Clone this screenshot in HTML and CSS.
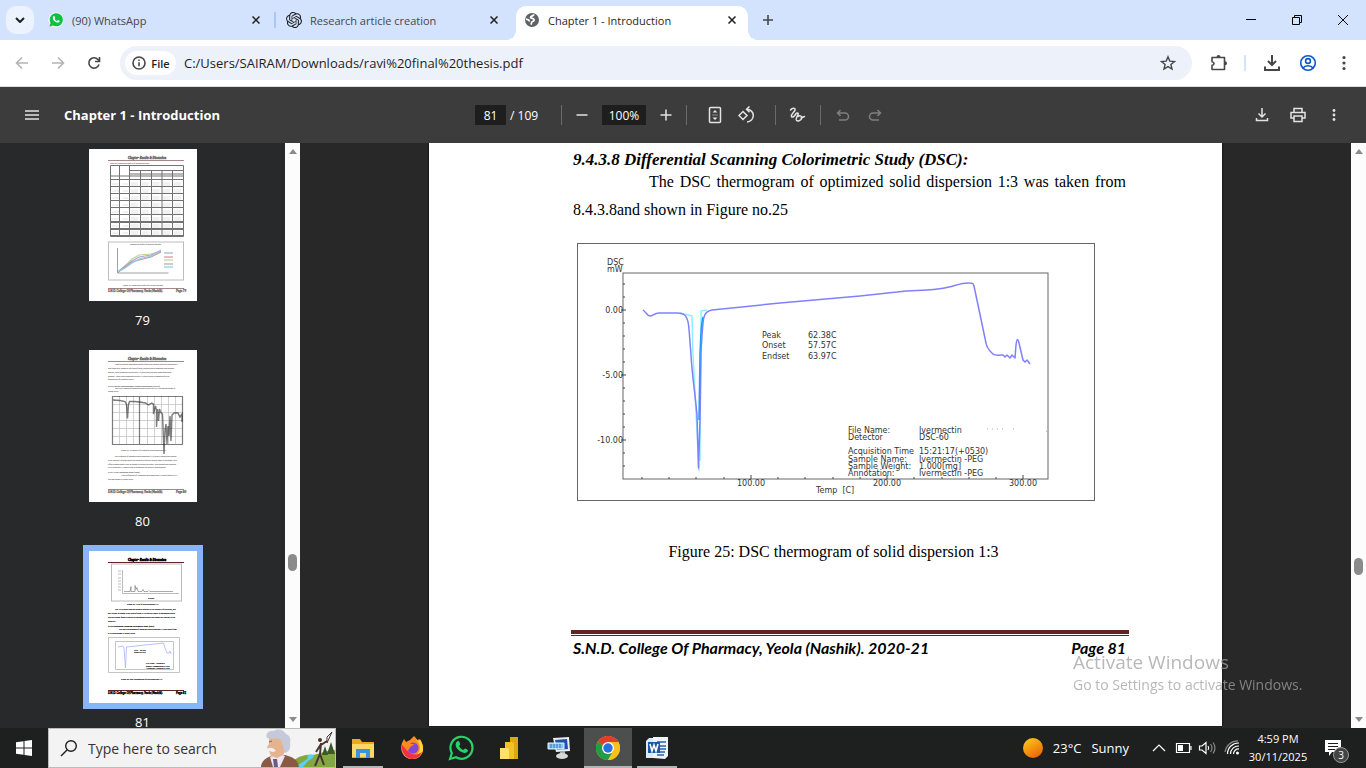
FILE: index.html
```html
<!DOCTYPE html>
<html lang="en">
<head>
<meta charset="utf-8">
<title>Chapter 1 - Introduction</title>
<link rel="stylesheet" href="styles.css">
</head>

<body>
<header class="tabstrip">
  <button class="tab-search" aria-label="Search tabs"><svg width="10" height="6" viewBox="0 0 10 6"><path d="M1 1l4 4 4-4" fill="none" stroke="#1f1f1f" stroke-width="2"/></svg></button>
  <div class="tab">
    <svg width="16" height="16" viewBox="0 0 16 16"><circle cx="8" cy="8" r="7.5" fill="#fff"/><path d="M1.5 14.5l1-3.5A6.6 6.6 0 1 1 5 13.5z" fill="#0dc143"/><path d="M5.5 4.2c.5-.5 1-.2 1.2.3l.5 1.200c.1.4-.6.9-.5 1.2.4.8 1.2 1.6 2.3 2 .4 0 .8-1 1.2-.8l1.3.7c.3.2.2.7-.1 1.1-.8 1-2.200.8-3.6.1C6.3 9.2 5 7.700 4.800 6.200c0-.8.3-1.600.7-2z" fill="#fff"/></svg>
    <span>(90) WhatsApp</span>
    <button class="close" aria-label="Close tab"><svg width="8" height="8" viewBox="0 0 8 8"><path d="M.5.5l7 7m0-7l-7 7"/></svg></button>
  </div>
  <i class="tab-sep"></i>
  <div class="tab">
    <svg width="16" height="16" viewBox="0 0 24 24" fill="#1f1f1f"><path d="M22.2819 9.8211a5.9847 5.9847 0 0 0-.5157-4.9108 6.0462 6.0462 0 0 0-6.5098-2.9A6.0651 6.0651 0 0 0 4.9807 4.1818a5.9847 5.9847 0 0 0-3.9977 2.9 6.0462 6.0462 0 0 0 .7427 7.0966 5.98 5.98 0 0 0 .511 4.9107 6.051 6.051 0 0 0 6.5146 2.9001A5.9847 5.9847 0 0 0 13.2599 24a6.0557 6.0557 0 0 0 5.7718-4.2058 5.9894 5.9894 0 0 0 3.9977-2.9001 6.0557 6.0557 0 0 0-.7475-7.0729zm-9.022 12.6081a4.4755 4.4755 0 0 1-2.8764-1.0408l.1419-.0804 4.7783-2.7582a.7948.7948 0 0 0 .3927-.6813v-6.7369l2.02 1.1686a.071.071 0 0 1 .038.052v5.5826a4.504 4.504 0 0 1-4.4945 4.4944zm-9.6607-4.1254a4.4708 4.4708 0 0 1-.5346-3.0137l.142.0852 4.783 2.7582a.7712.7712 0 0 0 .7806 0l5.8428-3.3685v2.3324a.0804.0804 0 0 1-.0332.0615L9.74 19.9502a4.4992 4.4992 0 0 1-6.1408-1.6464zM2.3408 7.8956a4.485 4.485 0 0 1 2.3655-1.9728V11.6a.7664.7664 0 0 0 .3879.6765l5.8144 3.3543-2.0201 1.1685a.0757.0757 0 0 1-.071 0l-4.8303-2.7865A4.504 4.504 0 0 1 2.3408 7.872zm16.5963 3.8558L13.1038 8.364 15.1192 7.2a.0757.0757 0 0 1 .071 0l4.8303 2.7913a4.4944 4.4944 0 0 1-.6765 8.1042v-5.6772a.79.79 0 0 0-.407-.667zm2.0107-3.0231l-.142-.0852-4.7735-2.7818a.7759.7759 0 0 0-.7854 0L9.409 9.2297V6.8974a.0662.0662 0 0 1 .0284-.0615l4.8303-2.7866a4.4992 4.4992 0 0 1 6.6802 4.66zM8.3065 12.863l-2.02-1.1638a.0804.0804 0 0 1-.038-.0567V6.0742a4.4992 4.4992 0 0 1 7.3757-3.4537l-.142.0805L8.704 5.459a.7948.7948 0 0 0-.3927.6813zm1.0976-2.3654l2.602-1.4998 2.6069 1.4998v2.9994l-2.5974 1.4997-2.6067-1.4997Z"/></svg>
    <span>Research article creation</span>
    <button class="close" aria-label="Close tab"><svg width="8" height="8" viewBox="0 0 8 8"><path d="M.5.5l7 7m0-7l-7 7"/></svg></button>
  </div>
  <i class="tab-sep hidden"></i>
  <div class="tab active">
    <svg width="16" height="16" viewBox="0 0 16 16"><circle cx="8" cy="8" r="7" fill="#5f6368"/><path d="M10 2.500c-.3 1.500-3.300 1.200-3.500 2.800-.1 1.500 2.700.6 3.500 2 .6 1.100-.4 2.200-1.600 2.200-1 0-.6 1.500-1.500 3.100M2 7.200c2 .3 3.300 1 3.300 2.300" fill="none" stroke="#fff" stroke-width="1.700"/></svg>
    <span>Chapter 1 - Introduction</span>
    <button class="close" aria-label="Close tab"><svg width="8" height="8" viewBox="0 0 8 8"><path d="M.5.5l7 7m0-7l-7 7"/></svg></button>
  </div>
  <button class="new-tab" aria-label="New tab"><svg width="12" height="12" viewBox="0 0 12 12"><path d="M6 1v10M1 6h10" stroke="#474747" stroke-width="1.600"/></svg></button>
  <div class="window-buttons">
    <button aria-label="Minimize"><svg width="10" height="10" viewBox="0 0 10 10"><path d="M0 4.500h10"/></svg></button>
    <button aria-label="Restore"><svg width="10" height="10" viewBox="0 0 10 10"><path d="M.5 2.500h7v7h-7zM2.500 2.500v-2h7v7h-2"/></svg></button>
    <button aria-label="Close"><svg width="10" height="10" viewBox="0 0 10 10"><path d="M0 0l10 10M10 0L0 10"/></svg></button>
  </div>
</header>

<nav class="toolbar">
  <button disabled aria-label="Back"><svg width="16" height="16" viewBox="0 0 16 16"><path d="M14 8H3M8 2.500L2.500 8 8 13.500" stroke="#b4b4b4"/></svg></button>
  <button disabled aria-label="Forward"><svg width="16" height="16" viewBox="0 0 16 16"><path d="M2 8h11M8 2.500L13.500 8 8 13.500" stroke="#b4b4b4"/></svg></button>
  <button aria-label="Reload"><svg width="16" height="16" viewBox="0 0 16 16"><path d="M13 9.500A5.200 5.200 0 1 1 12 4.500l1.500 1.500M13.500 2v4.500H9"/></svg></button>
  <div class="omnibox">
    <button class="file-chip"><svg width="16" height="16" viewBox="0 0 16 16"><circle cx="8" cy="8" r="6"/><path d="M8 7.300v4M8 4.500v1.500"/></svg>File</button>
    <input type="text" aria-label="Address" value="C:/Users/SAIRAM/Downloads/ravi%20final%20thesis.pdf">
    <button aria-label="Bookmark"><svg width="16" height="16" viewBox="0 0 16 16"><path d="M8 1.800l1.800 4.300 4.700.4-3.600 3 1.100 4.600-4-2.500-4 2.500 1.100-4.600-3.600-3 4.700-.4z" stroke-width="1.400"/></svg></button>
  </div>
  <button aria-label="Extensions"><svg width="18" height="18" viewBox="0 0 18 18"><path d="M2 3.500h12.500v12H2v-4.300c2.700-.3 2.700-3.200 0-3.500z" stroke-linejoin="round"/><path d="M6.500 3a2 2 0 0 1 4 0zM15 7.300a2 2 0 0 1 0 4z" fill="#474747" stroke="none"/></svg></button>
  <i class="toolbar-sep"></i>
  <button aria-label="Downloads"><svg width="18" height="18" viewBox="0 0 18 18"><path d="M9 1v10M5 7l4 4 4-4M2 12.500V16h14v-3.500" stroke-width="2"/></svg></button>
  <button aria-label="Profile"><svg class="profile" width="18" height="18" viewBox="0 0 18 18"><circle cx="9" cy="9" r="7.300"/><circle cx="9" cy="7" r="2.400"/><path d="M4 14c2-3 8-3 10 0"/></svg></button>
  <button aria-label="Menu"><svg class="dots" width="16" height="16" viewBox="0 0 16 16"><circle cx="8" cy="2.500" r="1.600"/><circle cx="8" cy="8" r="1.600"/><circle cx="8" cy="13.500" r="1.600"/></svg></button>
</nav>

<div class="pdf-bar">
  <div class="bar-start">
    <button aria-label="Toggle sidebar"><svg width="16" height="16" viewBox="0 0 16 16"><path d="M1 4h14M1 8h14M1 12h14"/></svg></button>
    <h1>Chapter 1 - Introduction</h1>
  </div>
  <div class="bar-center">
    <input class="page-no" type="text" aria-label="Page number" value="81"><span class="page-total">/ 109</span>
    <i class="bar-sep"></i>
    <button aria-label="Zoom out"><svg width="16" height="16" viewBox="0 0 16 16"><path d="M2.500 8h11"/></svg></button>
    <input class="zoom" type="text" aria-label="Zoom level" value="100%">
    <button aria-label="Zoom in"><svg width="16" height="16" viewBox="0 0 16 16"><path d="M2.500 8h11M8 2.500v11"/></svg></button>
    <i class="bar-sep"></i>
    <button class="after-sep" aria-label="Fit to page"><svg width="18" height="18" viewBox="0 0 18 18"><rect x="3.500" y="1.500" width="11" height="15" rx="1"/><path d="M6.500 6.500L9 4l2.500 2.500zM6.500 11.500L9 14l2.500-2.500z" fill="#e3e3e3" stroke="none"/><path d="M6.500 9h5" stroke-dasharray="1 1" stroke-width="1"/></svg></button>
    <button aria-label="Rotate"><svg width="18" height="18" viewBox="0 0 18 18"><path d="M5 5.500l4 4-4 4-4-4zM9 3.300a6.300 6.300 0 1 1 0 12.600M11.500.5L8.500 3.300l3 3"/></svg></button>
    <i class="bar-sep wide"></i>
    <button aria-label="Draw"><svg width="18" height="18" viewBox="0 0 18 18"><path d="M2.500 4C4 1.500 7.500 1.500 7 4 6.500 6.500 2.500 8 3.500 10.500c1 1.500 3-.5 4.300-2.500 1-1.500 2.700-1.500 2.400 0-.5 2.500-2.700 3.500-2 5.800.8 2.200 5 1 5.600-1.800.4-2.300-2.500-2.800-3.800-1.500M13 12l3.500-1.500" stroke-linecap="round"/></svg></button>
    <i class="bar-sep last"></i>
    <button disabled aria-label="Undo"><svg width="16" height="16" viewBox="0 0 16 16"><path d="M5.500 3L2.500 6l3 3M2.500 6H10a3.500 3.500 0 0 1 0 7H4"/></svg></button>
    <button disabled aria-label="Redo"><svg width="16" height="16" viewBox="0 0 16 16"><path d="M10.500 3l3 3-3 3M13.500 6H6a3.500 3.500 0 0 0 0 7h6"/></svg></button>
  </div>
  <div class="bar-end">
    <button aria-label="Download"><svg width="16" height="16" viewBox="0 0 16 16"><path d="M8 1v9M4.500 6.500L8 10l3.500-3.500M2.500 11v2.500h11V11"/></svg></button>
    <button aria-label="Print"><svg width="18" height="18" viewBox="0 0 18 18"><path d="M5 6V2.500h8V6M5 12H2V6.500h14V12h-3M5 10h8v5.500H5z"/></svg></button>
    <button aria-label="More actions"><svg class="dots" width="16" height="16" viewBox="0 0 16 16"><circle cx="8" cy="3.500" r="1.400"/><circle cx="8" cy="8" r="1.400"/><circle cx="8" cy="12.500" r="1.400"/></svg></button>
  </div>
</div>

<main class="pdf">
  <aside class="sidebar">
    <div class="thumbs">
      <figure class="thumb">
        <svg class="faded" viewBox="0 0 108 152">
          <text class="t-head" x="58" y="10">Chapter- Results &amp; Discussion</text>
          <path d="M19 11.500h76" stroke="#622423"/>
          <text class="t-text" x="21" y="15">Table 20: Dissolution profile of physical mixture</text>
          <g fill="none" stroke="#000" stroke-width="1">
            <path d="M21.500 16.500h73v71h-73zM30.500 16v71M40.500 16v71M51.500 22v65M62.500 22v65M73 22v65M83.500 22v65M40 21.500h54M40 25h54M21 27h73M21 30.500h73M21 37.500h73M21 44.500h73M21 51.500h73M21 58.500h73M21 65.500h73M21 72.500h73M21 73.500h73M21 79.500h73M21 80.500h73M21 86.500h73"/>
            <path d="M42 34h51M42 36h51M42 41h51M42 43h51M42 48h51M42 50h51M42 55h51M42 57h51M42 62h51M42 64h51M42 69h51M42 71h51M42 76h51M42 78h51M42 83h51M42 85h51M23 35h16M23 42h16M23 49h16M23 56h16M23 63h16M23 70h16M23 77h16M23 84h16" stroke="#999" stroke-dasharray="7 3.700" stroke-width=".5"/>
            <rect x="19.500" y="93" width="75" height="38" stroke="#888"/>
            <path d="M28.500 99v25h51" stroke="#555"/>
          </g>
          <text class="t-text" x="41" y="96">Dissolution profile of physical mixture</text>
          <g fill="none" stroke-width="1.200">
            <path d="M29 123l7-6 7-7 7-4 12-1 10-3" stroke="#8ab03a"/>
            <path d="M29 123l7-5 7-5 7-2 12-3 10-5" stroke="#b33b38"/>
            <path d="M29 123l7-6 7-5 7-4 12-2 10-4" stroke="#7357a0"/>
            <path d="M29 123l7-4 7-5 7-4 12-3 10-6" stroke="#2da5c8"/>
            <path d="M75 104h9" stroke="#4579b8"/><path d="M75 108h9" stroke="#b33b38"/><path d="M75 111h9" stroke="#8ab03a"/><path d="M75 115h9" stroke="#7357a0"/><path d="M75 118h9" stroke="#2da5c8"/>
          </g>
          <text class="t-text" x="34" y="137">Figure 21: Dissolution profile of Physical mixture</text>
          <path d="M19 139.500h76" stroke="#622423"/>
          <text class="t-foot" x="19" y="143">S.N.D. College Of Pharmacy, Yeola (Nashik).</text><text class="t-foot" x="87" y="143">Page 79</text>
        </svg>
        <figcaption>79</figcaption>
      </figure>
      <figure class="thumb">
        <svg class="faded" viewBox="0 0 108 152">
          <text class="t-head" x="58" y="10">Chapter- Results &amp; Discussion</text>
          <path d="M19 11.500h76" stroke="#622423"/>
          <g class="t-text">
            <text x="26" y="15">From the data of dissolution profile of physical mixture and solid dispersion it</text>
            <text x="19" y="19">was found that, among all the ratio of drug, excipient solid dispersion and physical</text>
            <text x="19" y="23">mixture, solid dispersion having ratio 1:3 (SD-PEG) and have good dissolution</text>
            <text x="19" y="27">property. Hence solid dispersion having 1:3 ratio is used as optimized for the</text>
            <text x="19" y="30">formulation of ivermectin tablet.</text>
            <text class="b" x="19" y="37">9.4.3.6 Fourier Transformation Infrared Spectroscopy (FT-IR)</text>
            <text x="26" y="39">The FT-IR spectra of optimized drug is given 8.4.3.6. The spectra shown in</text>
            <text x="19" y="42">Figure no.23</text>
            <text x="32" y="101">Figure 23: IR spectra of Ivermectin Solid dispersion 1:3</text>
            <text x="26" y="107">FT-IR spectra of optimized solid dispersion (1:3) clearly showed that change</text>
            <text x="19" y="111">in the intensity of peaks which are present in physical mixture drug IR spectrum. This</text>
            <text x="19" y="115">effect happens usually due to change in crystalline nature. This change and alteration</text>
            <text x="19" y="118">in IR bands and 1:3 would lead in responsible for stability enhancement.</text>
            <text class="b" x="19" y="123">9.4.3.7 X-ray Diffraction Study (XRD):</text>
            <text x="32" y="126">X-ray diffraction of Ivermectin solid dispersion 1:3 taken from 8.4.3.7</text>
            <text x="19" y="130">and was shown in Figure no.24</text>
          </g>
          <path d="M30.500 46v48M37.500 46v48M44.500 46v48M58.500 46v48M65.500 46v48M72.500 46v48M79.500 46v48M86.500 46v48M24 54.500h70M24 62.500h70M24 70.500h70M24 78.500h70M24 86.500h70" stroke="#888" stroke-width=".7"/>
          <path d="M23.500 46.500h70v48h-70zM50.500 46v48" fill="none" stroke="#111" stroke-width="1.200"/>
          <path d="M24 50l7 .5 5 1 1.500 3 1 14 1-14 1-3h5l5 .5 6 1 3 2 3-2 2 1v10l2-8 1 4v17l1-18 1 12 1-12 1 3 2 2 1.500 40 1-24 1-6 1 20 1-18 1 10 1-20 1 25 1-26 2-2 4 0 2 4 2-3v8" fill="none" stroke="#111" stroke-width="1.400"/>
          <path d="M19 139.500h76" stroke="#622423"/>
          <text class="t-foot" x="19" y="143">S.N.D. College Of Pharmacy, Yeola (Nashik).</text><text class="t-foot" x="87" y="143">Page 80</text>
        </svg>
        <figcaption>80</figcaption>
      </figure>
      <figure class="thumb current">
        <svg viewBox="0 0 108 152">
          <text class="t-head" x="58" y="10">Chapter- Results &amp; Discussion</text>
          <path d="M19 11.500h76" stroke="#622423"/>
          <rect x="22.500" y="13" width="70" height="37" fill="none" stroke="#bbb"/>
          <path d="M33.500 19v23.500H90M29 20h3M29 23h3M29 27h3M29 30h3M29 33h3M29 36h3M29 39h3" fill="none" stroke="#aaa" stroke-width=".8"/>
          <path d="M35 40.500h6l1-5v5h4v-6l1 4 1-2 1 4h4l1-2 1 2h4l1-1 1 1h23" fill="none" stroke="#555" stroke-width=".5"/>
          <g class="t-text">
            <text x="59" y="48">2-Theta</text>
            <text x="38" y="54">Figure 24: XRD of solid dispersion 1:3</text>
            <text x="26" y="59">The XRD graph obtained showed decrease in the intensity of the peaks, this</text>
            <text x="19" y="63">may be due to change in the state of drug i.e Crystalline nature to amorphous nature</text>
            <text x="19" y="67">and this change from crystalline to amorphous nature also causes the increase in the</text>
            <text x="19" y="71">solubility.</text>
            <text class="b" x="19" y="76">9.4.3.8 Differential Scanning Colorimetric Study (DSC):</text>
            <text x="30" y="79">The DSC thermogram of optimized solid dispersion 1:3 was taken from</text>
            <text x="19" y="83">8.4.3.8and shown in Figure no.25</text>
            <text x="45" y="100">Peak</text><text x="51" y="100">62.38C</text>
            <text x="45" y="102">Endset</text><text x="51" y="102">63.97C</text>
            <text x="57" y="113">File Name:</text><text x="67" y="113">Ivermectin</text>
            <text x="57" y="116">Sample Name:</text><text x="67" y="116">Ivermectin -PEG</text>
            <text x="57" y="118">Annotation:</text><text x="67" y="118">Ivermectin -PEG</text>
            <text x="32" y="129">Figure 25: DSC thermogram of solid dispersion 1:3</text>
          </g>
          <path d="M19.500 86.500h71v35h-71zM26.500 90.500h58v28h-58z" fill="none" stroke="#aaa" stroke-width=".7"/>
          <path d="M29 96l5-1 1 2 1.500 20L37.500 96l37-4 1.500 5 2 5h2l1-2 1 3" fill="none" stroke="#a5b2ff" stroke-width=".8"/>
          <path d="M19 139.500h76" stroke="#622423"/>
          <text class="t-foot" x="19" y="143">S.N.D. College Of Pharmacy, Yeola (Nashik).</text><text class="t-foot" x="87" y="143">Page 81</text>
        </svg>
        <figcaption>81</figcaption>
      </figure>
    </div>
    <div class="scrollbar"><i class="up"></i><i class="handle"></i><i class="down"></i></div>
  </aside>

  <section class="viewer">
    <div class="canvas">
      <article class="page">
        <h2>9.4.3.8 Differential Scanning Colorimetric Study (DSC):</h2>
        <p>The DSC thermogram of optimized solid dispersion 1:3 was taken from 8.4.3.8and shown in Figure no.25</p>
        <figure class="thermogram">
          <svg width="518" height="258" viewBox="0 0 518 258">
            <rect x=".5" y=".5" width="517" height="257" class="frame"/>
            <rect x="46" y="30" width="425" height="206" class="frame"/>
            <!-- axis ticks -->
            <path class="ticks" d="M46 41h2M46 54h2M44 67h5M46 80h2M46 93h2M46 106h2M46 119h2M44 132h5M46 145h2M46 158h2M46 171h2M46 184h2M44 197h5M46 210h2M46 223h2M65 236v-2M92 236v-2M119 236v-2M147 236v-2M174 236v-4M201 236v-2M228 236v-2M256 236v-2M283 236v-2M310 236v-4M337 236v-2M365 236v-2M392 236v-2M419 236v-2M446 236v-4"/>
            <g class="labels">
              <text x="30" y="22">DSC</text><text x="30" y="29">mW</text>
              <text class="r" x="46" y="70">0.00</text><text class="r" x="46" y="135">-5.00</text><text class="r" x="46" y="200">-10.00</text>
              <text class="m" x="174" y="243">100.00</text><text class="m" x="310" y="243">200.00</text><text class="m" x="446" y="243">300.00</text>
              <text x="239" y="250">Temp&#160; [C]</text>
              <text x="185" y="95">Peak</text><text x="231" y="95">62.38C</text>
              <text x="185" y="105">Onset</text><text x="231" y="105">57.57C</text>
              <text x="185" y="116">Endset</text><text x="231" y="116">63.97C</text>
              <text x="271" y="190">File Name:</text><text x="342" y="190">Ivermectin</text>
              <text x="271" y="197">Detector</text><text x="342" y="197">DSC-60</text>
              <text x="271" y="211">Acquisition Time</text><text x="342" y="211">15:21:17(+0530)</text>
              <text x="271" y="219">Sample Name:</text><text x="342" y="219">Ivermectin -PEG</text>
              <text x="271" y="226">Sample Weight:</text><text x="342" y="226">1.000[mg]</text>
              <text x="271" y="233">Annotation:</text><text x="342" y="233">Ivermectin -PEG</text>
            </g>
            <g fill="none" stroke-width="1.500" stroke-linejoin="round">
              <path d="M103 70l12 3 1 38 6 117M123 218l1-150 6-1" stroke="#8df0ff"/>
              <path d="M66 67c3 2 4 6 7 6s4-3 9-3h18c8 0 11 3 12 16l2 26c1 20 4 37 6 60l1.500 53L123 177l1-67c1-20 2-33 3-36 1-4 3-6 8-7l68-7 80-7 37-4c15-2 22-1 30-2 14-1 18-2 22-3 8-2 12-4 20-4 4 0 4 0 5 3L401 62l8 38c1 6 4 8 7 11 2 2 8 1 10 1l2 2 2-2 3 3 2-3 3 3 1-13c1-8 2-6 3-2l4 17 2 2 2-2 3 4" stroke="#8080ff"/>
              <path d="M122 177l1-67c1-20 1-30 3-36" stroke="#1f9dff"/>
            </g>
            <path d="M410 186h20M436 186h3M470 188l-2 1" stroke="#aaa" stroke-dasharray="1 4"/>
          </svg>
          <figcaption>Figure 25: DSC thermogram of solid dispersion 1:3</figcaption>
        </figure>
        <footer>
          <span>S.N.D. College Of Pharmacy, Yeola (Nashik). 2020-21</span>
          <span>Page 81</span>
        </footer>
      </article>
    </div>
    <div class="scrollbar"><i class="up"></i><i class="handle"></i><i class="down"></i></div>
  </section>
</main>

<div class="activate">
  <strong>Activate Windows</strong>
  <span>Go to Settings to activate Windows.</span>
</div>

<footer class="taskbar">
  <button class="start" aria-label="Start"><svg width="16" height="16" viewBox="0 0 16 16"><path d="M0 2.200L7.500 1.200v6.300H0zM8.500 1L16 0v7.500H8.500zM0 8.500h7.500v6.300L0 13.800zM8.500 8.500H16V16l-7.500-1z" fill="#fff"/></svg></button>
  <label class="search">
    <svg width="18" height="18" viewBox="0 0 18 18"><path d="M1 17l6-6" stroke="#1f1f1f" stroke-width="1.500"/><circle cx="11" cy="7" r="5.300" fill="none" stroke="#1f1f1f" stroke-width="1.400"/></svg>
    <input type="text" placeholder="Type here to search" aria-label="Type here to search">
    <svg width="74" height="38" viewBox="0 0 74 38">
      <path d="M26 38c7-10 18-13 26-12l8-2c6-3 10-2 14-3v17z" fill="#82a83f"/>
      <path d="M46 27c6-3 8-1 6 2l-5 3-5 6h-6c2-5 14-7 10-11z" fill="#5bd0f0"/>
      <path d="M61 26l3-9 3 9zM66 25l4-12 4 12z" fill="#3c5a26"/>
      <path d="M0 38c0-5 4-9 10-11l14-1c8 2 13 5 14 12z" fill="#8a5a44"/>
      <path d="M9 28l3 10h7l5-11-8-3z" fill="#eee7f2"/><path d="M12 30l1 8h4l-1-8z" fill="#6c5a86"/>
      <path d="M8 9c4-4 12-4 16 0l2 10-4 7-6 3-6-2-2-5-2-4 2-3z" fill="#e5b48f"/>
      <path d="M6 9C4 5 8 1 13 2c4-3 10-1 12 3 4 1 5 6 4 9 1 5-1 9-5 10l-2-7-2-6c-4-3-8 0-14-2z" fill="#c5c9d9"/>
      <path d="M6 20c3-2 6-2 9 2l-3 1-4-1-2 2z" fill="#eef0f6"/><path d="M8 13l3-1" stroke="#6a6a7e"/>
      <g stroke="#4a3630" fill="none" stroke-width="2"><path d="M60 14l-1 11-5 12M59 25l4 11M60 15l-5 8M60 16l6-4"/><path d="M66 14l5-11-5 5z" stroke-width="1"/></g><circle cx="59" cy="11" r="2" fill="#4a3630"/>
    </svg>
  </label>
  <nav class="apps">
    <button class="running" aria-label="File Explorer"><svg width="24" height="24" viewBox="0 0 24 24"><path d="M1 3h8l2 3h12v16H1z" fill="#e9a923"/><path d="M1 8h22v13H1z" fill="#ffd766"/><path d="M5 13h14v9h-4v-5H9v5H5z" fill="#3a93dd"/></svg></button>
    <button aria-label="Firefox"><svg width="24" height="24" viewBox="0 0 24 24"><path d="M12 23C4 23-1 15 2 7l2-4 2 3 4-2 4-4 3 4 3-1c4 7 4 13 1 16-2 3-6 4-9 4z" fill="#ff8a1e"/><path d="M14 0l3 5c4 4 3 9 2 11-4 6-12 6-16 0 1 4 4 7 9 7 7 0 11-5 11-11 0-4-2-7-3-8l-2 1z" fill="#ffd43b"/><path d="M2 9c-1 7 4 14 10 14 5 0 9-3 10-7-6 4-11 3-14-1z" fill="#f0304b"/><circle cx="13" cy="12" r="5.500" fill="#8545d8"/><path d="M4 8l5-2 2 2h3c-1 2-4 2-4 4l-3 3z" fill="#ff8a1e"/></svg></button>
    <button aria-label="WhatsApp"><svg width="26" height="26" viewBox="0 0 26 26"><path d="M2 24l1.800-6A11 11 0 1 1 8 22.300z" fill="none" stroke="#25d366" stroke-width="2.200"/><path d="M9 6.500c1-1 2-.5 2.300.3l.9 2.200c.2.800-1.200 1.600-1 2.200.8 1.600 2 2.800 4 3.700.7.100 1.400-1.500 2.200-1.300l2.200 1.100c.8.500.2 1.700-.4 2.300-1.700 1.500-4.200 1-6.400-.2-2.500-1.400-4.600-3.700-5.100-6.300-.2-1.500.3-3 1.300-4z" fill="#25d366"/></svg></button>
    <button aria-label="Power BI"><svg width="24" height="24" viewBox="0 0 24 24"><path d="M12 1h8v22h-8z" fill="#e0a610"/><path d="M7 6h7q2 0 2 2v15H7z" fill="#f2c22c"/><path d="M2 12h7q2 0 2 2v9H2z" fill="#ffe06a"/></svg></button>
    <button aria-label="Remote desktop"><svg width="24" height="24" viewBox="0 0 24 24"><path d="M6 2l16-1 1 14-14 1z" fill="#e8edf4"/><path d="M8 4l12-1 1 10-11 1z" fill="#1f4fb4"/><path d="M1 7h16v6H1z" fill="#8cc8f4" stroke="#e8f4ff"/><path d="M3 9h12M3 11h12" stroke="#2870c0" stroke-dasharray="2 1"/><path d="M13 15h5v4h-5z" fill="#aaa"/><ellipse cx="15" cy="20" rx="6" ry="3" fill="#d8d8d8"/></svg></button>
    <button class="running selected" aria-label="Google Chrome"><svg width="24" height="24" viewBox="0 0 24 24"><circle cx="12" cy="12" r="12" fill="#fbc116"/><path d="M12 12L1.600 6A12 12 0 0 1 22.400 6z" fill="#e33b2e"/><path d="M1.600 6A12 12 0 0 0 12 24l5.200-9L12 12z" fill="#229d47"/><path d="M22.400 6H12l5.200 9L12 24A12 12 0 0 0 22.400 6z" fill="#fbc116"/><circle cx="12" cy="12" r="6" fill="#fff"/><circle cx="12" cy="12" r="4.700" fill="#2a70e0"/></svg></button>
    <button class="running" aria-label="Word"><svg width="24" height="24" viewBox="0 0 24 24"><path d="M8 1h15v19l-3 3-12-1z" fill="#eef4fb"/><path d="M12 6h9M15 10h6M15 13h6M12 16h8M12 19h7" stroke="#2b60ab" stroke-width="1.400"/><path d="M1 5l3-3h4v20H1z" fill="#dfe9f5"/><path d="M3 6h12v11H3z" fill="#1e56a4"/><path d="M5 8l2 7 2-6 2 6 2-7" stroke="#fff" stroke-width="1.600" fill="none"/></svg></button>
  </nav>
  <div class="tray">
    <span class="weather"><svg width="20" height="20" viewBox="0 0 20 20"><defs><linearGradient id="sun" x2=".6" y2="1"><stop stop-color="#ffcf1a"/><stop offset="1" stop-color="#ec6a08"/></linearGradient></defs><circle cx="10" cy="10" r="10" fill="url(#sun)"/></svg><span>23°C</span><span>Sunny</span></span>
    <svg width="24" height="16" viewBox="0 0 24 16"><path d="M6 11l6-6 6 6"/></svg>
    <svg width="24" height="16" viewBox="0 0 24 16"><path d="M5.500 3.500h13v9h-13zM20 6v4"/><path d="M7 5h5v6H7z" fill="#fff" stroke="none"/></svg>
    <svg width="24" height="16" viewBox="0 0 24 16"><path d="M4.500 6H7l4-3.500v11L7 10H4.500zM13 6q1.500 2 0 4"/><path d="M15.500 4q3 4 0 8M18 2.500q4 5.500 0 11" stroke="#888"/></svg>
    <svg width="28" height="16" viewBox="0 0 28 16"><path d="M8.500 14A11 11 0 0 1 20 3M11.500 14A8 8 0 0 1 20 6M14.500 14A5 5 0 0 1 20 9"/><path d="M6 12A13 13 0 0 1 19 .8" stroke="#888"/><circle cx="18.500" cy="13" r="1.500" fill="#fff" stroke="none"/></svg>
    <time class="clock">4:59 PM<br>30/11/2025</time>
    <button class="notice" aria-label="Notifications"><svg width="16" height="16" viewBox="0 0 16 16"><path d="M0 0h16v12H7l-3 4v-4H0z" fill="#fff"/><path d="M3 3.500h10M3 6.500h10M3 9.500h7" stroke="#1c1c1c"/></svg><span class="badge">3</span></button>
  </div>
</footer>
</body>
</html>
```
FILE: styles.css
```css
* {
  box-sizing: border-box;
}

body {
  margin: 0;
  height: 100vh;
  display: flex;
  flex-direction: column;
  overflow: hidden;
  font-family: "Open Sans", "Noto Sans", sans-serif;
  font-size: 12px;
  color: #1f1f1f;
}

button, input {
  font: inherit;
  color: inherit;
  border: 0;
  padding: 0;
  margin: 0;
  background: none;
  outline: 0;
}

button {
  display: flex;
  align-items: center;
  justify-content: center;
  flex: none;
}

svg {
  flex: none;
  display: block;
}

h1, h2, p, figure {
  margin: 0;
}

/* tab strip */
.tabstrip {
  flex: none;
  height: 40px;
  display: flex;
  align-items: center;
  padding-left: 6px;
  background: #d3e3fd;
}

.tab-search {
  width: 28px;
  height: 28px;
  margin-right: 6px;
  border-radius: 10px;
  background: #ecf3fe;
}

.tab {
  flex: 0 1 232px;
  height: 34px;
  align-self: flex-end;
  display: flex;
  align-items: center;
  padding: 0 8px 6px;
  font-size: 11px;
  color: #474747;
}

.tab span {
  flex: 1;
  margin-left: 8px;
  white-space: nowrap;
  overflow: hidden;
}

.tab.active {
  position: relative;
  border-radius: 10px 10px 0 0;
  background: #fff;
  color: #1f1f1f;
}

.tab.active::before,
.tab.active::after {
  content: "";
  position: absolute;
  bottom: 0;
  width: 10px;
  height: 10px;
}

.tab.active::before {
  right: 100%;
  background: radial-gradient(circle at 0 0, transparent 10px, #fff 10px);
}

.tab.active::after {
  left: 100%;
  background: radial-gradient(circle at 100% 0, transparent 10px, #fff 10px);
}

.close {
  width: 16px;
  height: 16px;
}

.close path {
  stroke: #1f1f1f;
  stroke-width: 1.5;
}

.tab-sep {
  width: 2px;
  height: 16px;
  margin: 0 2px;
  background: #a8c7fa;
}

.tab-sep.hidden {
  visibility: hidden;
}

.new-tab {
  width: 28px;
  height: 28px;
  margin-left: 6px;
}

.window-buttons {
  display: flex;
  margin-left: auto;
}

.window-buttons button {
  width: 46px;
  height: 40px;
}

.window-buttons path {
  fill: none;
  stroke: #000;
}

/* address row */
.toolbar {
  flex: none;
  height: 47px;
  display: flex;
  align-items: center;
  padding: 0 4px;
  border-bottom: 1px solid #dcdcdc;
  background: #fff;
}

.toolbar button {
  width: 36px;
  height: 36px;
}

.toolbar svg {
  fill: none;
  stroke: #474747;
  stroke-width: 1.6;
}

.toolbar svg.profile {
  stroke: #0b57d0;
}

.toolbar svg.dots {
  fill: #474747;
  stroke: none;
}

.omnibox {
  flex: 1;
  height: 34px;
  display: flex;
  align-items: center;
  margin: 0 9px 0 8px;
  padding: 0 6px 0 5px;
  border-radius: 17px;
  background: #ecf1fa;
}

.omnibox .file-chip {
  width: 51px;
  height: 24px;
  gap: 4px;
  border-radius: 12px;
  background: #fff;
  font-size: 11px;
  font-weight: 600;
}

.omnibox input {
  flex: 1;
  min-width: 0;
  margin-left: 8px;
  font-size: 13px;
}

.toolbar-sep {
  width: 2px;
  height: 16px;
  margin: 0 8px 0 7px;
  background: #d3e3fd;
}

/* pdf toolbar */
.pdf-bar {
  flex: none;
  height: 56px;
  display: grid;
  grid-template-columns: 1fr auto 1fr;
  align-items: center;
  padding: 0 16px;
  background: #3c3c3c;
  color: #fff;
}

.pdf-bar h1 {
  margin-left: 16px;
  font-size: 13px;
  font-weight: 700;
}

.pdf-bar svg {
  fill: none;
  stroke: #e3e3e3;
  stroke-width: 1.5;
}

.pdf-bar svg.dots {
  fill: #e3e3e3;
  stroke: none;
}

.pdf-bar button {
  width: 32px;
  height: 32px;
}

.pdf-bar button:disabled {
  opacity: .4;
}

.bar-start, .bar-center, .bar-end {
  display: flex;
  align-items: center;
}

.bar-end {
  justify-content: flex-end;
  gap: 4px;
}

.pdf-bar input {
  height: 20px;
  background: #1e1e1e;
  text-align: center;
}

.pdf-bar .page-no {
  width: 31px;
}

.page-total {
  width: 36px;
  margin-left: 4px;
}

.pdf-bar .zoom {
  width: 44px;
  margin: 0 4px;
}

.bar-sep {
  width: 1px;
  height: 20px;
  margin: 0 4px 0 15px;
  background: #6a6a6a;
}

.bar-sep + .after-sep {
  margin-left: 8px;
}

.zoom + button + .bar-sep {
  margin-left: 4px;
}

.bar-sep.wide {
  margin: 0 5px 0 12px;
}

.bar-sep.last {
  margin: 0 6px 0 7px;
}

/* document area */
.pdf {
  flex: 1;
  min-height: 0;
  display: flex;
  background: #282828;
}

.sidebar {
  width: 300px;
  display: flex;
  background: #28292a;
}

.thumbs {
  flex: 1;
  display: flex;
  flex-direction: column;
  align-items: center;
  overflow: hidden;
}

.thumb {
  flex: none;
  width: 120px;
  height: 201px;
  color: #fff;
  font-size: 13px;
  text-align: center;
}

.thumb svg {
  width: 120px;
  height: 164px;
  padding: 6px;
  background: #fff content-box;
}

.thumb.current svg {
  background: linear-gradient(#fff, #fff) content-box, #8ab4f8;
}

.thumb figcaption {
  line-height: 26px;
}

.faded > * {
  opacity: .55;
}

.t-head {
  font: italic bold 3px "Liberation Serif", serif;
  text-anchor: middle;
  stroke: #000;
  stroke-width: .5px;
}

.t-text {
  font: 2px "Liberation Serif", serif;
  fill: #000;
  stroke: #000;
  stroke-width: .1px;
}

.t-text .b {
  font-weight: bold;
  font-style: italic;
}

.t-foot {
  font: italic bold 3px Lato, sans-serif;
  stroke: #000;
  stroke-width: .3px;
}

.scrollbar {
  flex: none;
  width: 15px;
  display: grid;
  grid-template-rows: 16px 395fr 17px 139fr 18px;
  justify-items: center;
  align-items: center;
  background: #fcfcfc;
}

.viewer .scrollbar {
  grid-template-rows: 16px 399fr 17px 135fr 18px;
}

.up, .down {
  border: 4px solid transparent;
}

.up {
  grid-row: 1;
  border-top: 0;
  border-bottom: 5px solid #8a8a8a;
}

.down {
  grid-row: 5;
  border-bottom: 0;
  border-top: 5px solid #8a8a8a;
}

.handle {
  grid-row: 3;
  width: 9px;
  height: 17px;
  border-radius: 5px;
  background: #8b8b8b;
}

.viewer {
  flex: 1;
  min-width: 0;
  display: flex;
}

.canvas {
  flex: 1;
  overflow: hidden;
}

.page {
  width: 793px;
  margin: 0 auto;
  padding: 9px 96px 66px 144px;
  background: #fff;
  box-shadow: 0 0 2px #000;
  color: #000;
  font: 16px/28px "Liberation Serif", serif;
}

.page h2 {
  font-size: 17px;
  line-height: 16px;
  font-style: italic;
  white-space: nowrap;
}

.page p {
  text-indent: 76px;
  text-align: justify;
}

.thermogram {
  margin: 19px 30px 0 4px;
}

.frame {
  fill: none;
  stroke: #666;
}

.ticks {
  stroke: #444;
}

.labels {
  font: 8px "DejaVu Sans", sans-serif;
  fill: #333;
}

.labels .r {
  text-anchor: end;
}

.labels .m {
  text-anchor: middle;
}

.thermogram figcaption {
  margin-top: 37px;
  padding-right: 6px;
  text-align: center;
}

.page footer {
  display: flex;
  flex-wrap: wrap;
  justify-content: space-between;
  margin: 64px -3px 0 -2px;
  padding: 0 3px 0 2px;
  font: italic bold 16px/24px Lato, sans-serif;
}

.page footer::before {
  content: "";
  flex: 0 0 calc(100% + 5px);
  height: 1px;
  margin: 0 -3px 0 -2px;
  border-top: 4px solid #622423;
  border-bottom: 1px solid #622423;
}

.activate {
  position: fixed;
  right: 57px;
  bottom: 72px;
  width: 236px;
  color: rgba(160, 160, 160, .75);
  font-size: 14px;
  line-height: 22px;
  white-space: nowrap;
  pointer-events: none;
}

.activate strong {
  display: block;
  font-size: 19px;
  line-height: 24px;
  font-weight: 400;
}

/* taskbar */
.taskbar {
  flex: none;
  height: 40px;
  display: flex;
  background: #1e1f1f;
  color: #fff;
}

.start {
  width: 48px;
}

.search {
  width: 288px;
  display: flex;
  align-items: center;
  padding-left: 11px;
  border: 1px solid #bbb;
  background: #f3f3f3;
}

.search input {
  flex: 1;
  min-width: 0;
  margin-left: 10px;
  font-size: 14px;
  color: #333;
}

.search input::placeholder {
  color: #333;
  opacity: 1;
}

.apps {
  display: flex;
  gap: 1px;
  margin-left: 3px;
}

.apps button {
  position: relative;
  width: 48px;
}

.apps .selected {
  background: #4d4e4e;
}

.running::after {
  content: "";
  position: absolute;
  left: 4px;
  right: 4px;
  bottom: 0;
  height: 2px;
  background: #b5b5b5;
}

.selected::after {
  left: 0;
  right: 0;
}

.tray {
  display: flex;
  align-items: center;
  margin-left: auto;
  padding-right: 9px;
}

.tray > svg {
  fill: none;
  stroke: #fff;
  stroke-width: 1.2;
}

.weather {
  display: flex;
  align-items: center;
  gap: 10px;
  margin-right: 18px;
  font-size: 13px;
}

.clock {
  width: 62px;
  font-size: 11px;
  line-height: 18px;
  text-align: center;
}

.notice {
  position: relative;
  width: 48px;
  height: 40px;
}

.badge {
  position: absolute;
  left: 24px;
  top: 19px;
  width: 16px;
  height: 16px;
  border: 1px solid #999;
  border-radius: 50%;
  background: #444;
  font-size: 10px;
  line-height: 14px;
}
```
